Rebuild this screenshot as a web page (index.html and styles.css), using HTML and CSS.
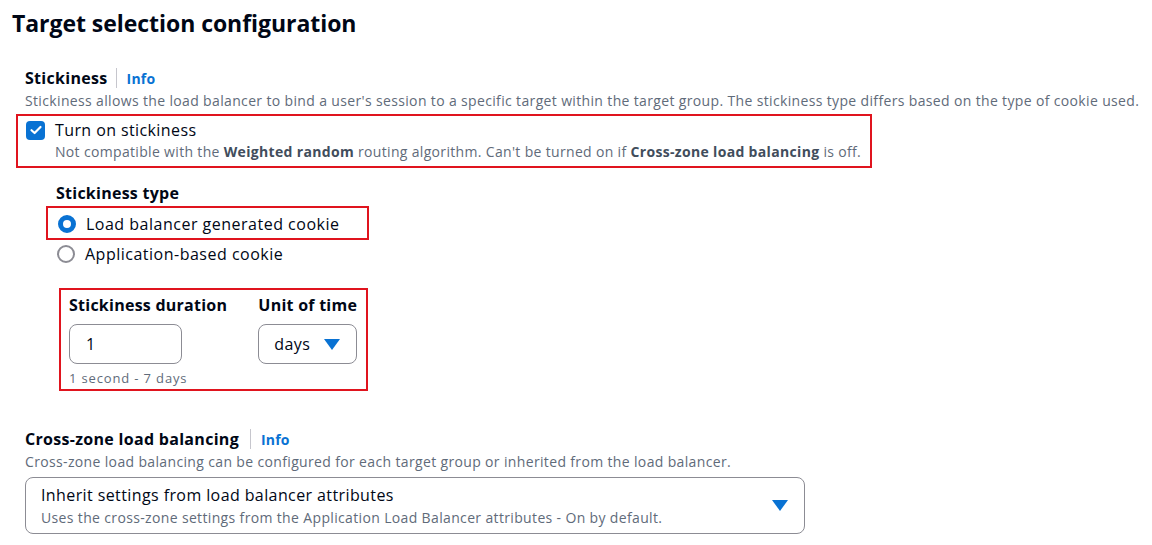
FILE: index.html
```html
<!DOCTYPE html>
<html lang="en">
<head>
<meta charset="utf-8">
<title>Target selection configuration</title>
<link rel="stylesheet" href="styles.css">
</head>
<body>
<main class="panel">
  <h2 class="title">Target selection configuration</h2>

  <section class="field">
    <div class="label-row">
      <span class="label">Stickiness</span>
      <span class="sep"></span>
      <a class="info" href="#">Info</a>
    </div>
    <p class="desc">Stickiness allows the load balancer to bind a user's session to a specific target within the target group. The stickiness type differs based on the type of cookie used.</p>

    <div class="hl hl-check">
      <label class="check-row">
        <span class="checkbox">
          <svg viewBox="0 0 14 14" width="14" height="14"><path d="M2.5 7.2 L5.6 10 L11.5 4" fill="none" stroke="#fff" stroke-width="2.2" stroke-linecap="round" stroke-linejoin="round"/></svg>
        </span>
        <span class="check-text">Turn on stickiness</span>
      </label>
      <p class="check-desc">Not compatible with the <b>Weighted random</b> routing algorithm. Can't be turned on if <b>Cross-zone load balancing</b> is off.</p>
    </div>

    <div class="nested">
      <div class="sub-label">Stickiness type</div>
      <div class="hl hl-radio">
        <label class="radio-row">
          <span class="radio on"></span>
          <span class="radio-text">Load balancer generated cookie</span>
        </label>
      </div>
      <label class="radio-row plain">
        <span class="radio"></span>
        <span class="radio-text">Application-based cookie</span>
      </label>

      <div class="hl hl-duration">
        <div class="dur-grid">
          <div class="dur-col">
            <div class="sub-label">Stickiness duration</div>
            <div class="input">1</div>
            <div class="hint">1 second - 7 days</div>
          </div>
          <div class="dur-col">
            <div class="sub-label">Unit of time</div>
            <div class="select small">
              <span>days</span>
              <span class="caret"></span>
            </div>
          </div>
        </div>
      </div>
    </div>
  </section>

  <section class="field cross">
    <div class="label-row">
      <span class="label">Cross-zone load balancing</span>
      <span class="sep"></span>
      <a class="info" href="#">Info</a>
    </div>
    <p class="desc">Cross-zone load balancing can be configured for each target group or inherited from the load balancer.</p>
    <div class="select big">
      <div class="big-text">
        <div class="big-main">Inherit settings from load balancer attributes</div>
        <div class="big-sub">Uses the cross-zone settings from the Application Load Balancer attributes - On by default.</div>
      </div>
      <span class="caret"></span>
    </div>
  </section>
</main>
</body>
</html>
```

FILE: styles.css
```css
* { box-sizing: border-box; }
html, body { margin: 0; padding: 0; background: #fff; }
body {
  font-family: "Open Sans", "Noto Sans", Arial, sans-serif;
  color: #000716;
  width: 1152px;
  height: 545px;
  overflow: hidden;
}
.panel { padding: 7px 0 0 12px; }
.title {
  margin: 0;
  font-size: 23px;
  font-weight: 700;
  line-height: 32px;
  letter-spacing: -0.05px;
}
.field { padding-left: 13px; margin-top: 28px; }
.label-row { display: flex; align-items: center; height: 22px; }
.label { font-size: 16px; font-weight: 700; letter-spacing: 0.3px; }
.sep { width: 1px; height: 20px; background: #c6c6cd; margin: 0 10px 0 8px; }
.info { color: #0972d3; font-size: 14px; font-weight: 700; text-decoration: none; letter-spacing: 0.2px; }
.desc {
  margin: 2px 0 0;
  font-size: 14px;
  line-height: 20px;
  color: #5f6b7a;
  letter-spacing: 0.35px;
}
.hl { border: 2px solid #e0141e; }
.hl-check {
  width: 856px;
  margin: 3px 0 0 -9px;
  padding: 2px 0 4px 8px;
}
.check-row { display: flex; align-items: center; gap: 10px; height: 24px; }
.checkbox {
  width: 19px; height: 19px; border-radius: 4px;
  background: #0972d3;
  display: flex; align-items: center; justify-content: center;
}
.check-text { font-size: 16px; letter-spacing: 0.4px; }
.check-desc {
  margin: 0 0 0 29px;
  font-size: 14px; line-height: 20px; color: #5f6b7a;
  letter-spacing: 0.33px;
}
.check-desc b { font-weight: 700; color: #414d5c; }
.nested { padding-left: 31px; margin-top: 14px; }
.sub-label { font-size: 16px; font-weight: 700; line-height: 22px; letter-spacing: 0.25px; }
.hl-radio {
  width: 323px;
  margin: 2px 0 0 -10px;
  padding: 3px 0 1px 9px;
}
.radio-row { display: flex; align-items: center; gap: 10px; height: 26px; }
.radio-row.plain { margin-top: 1px; margin-left: 1px; }
.hl-radio .radio-row { margin-left: 1px; }
.radio {
  width: 18px; height: 18px; border-radius: 50%;
  border: 2px solid #8c8c94; background: #fff;
  flex: none;
}
.radio.on { border: 5px solid #0972d3; }
.radio-text { font-size: 16px; letter-spacing: 0.5px; }
.hl-duration {
  width: 309px;
  margin: 21px 0 0 3px;
  padding: 4px 0 3px 8px;
}
.dur-grid { display: flex; gap: 31px; }
.dur-col { display: flex; flex-direction: column; }
.input, .select {
  border: 1px solid #8c8c94;
  border-radius: 8px;
  height: 40px;
  margin-top: 8px;
  display: flex; align-items: center;
  font-size: 16px;
  letter-spacing: 0.4px;
}
.input { width: 113px; padding-left: 16px; }
.hint { font-size: 13px; line-height: 16px; margin-top: 6px; color: #5f6b7a; letter-spacing: 0.85px; }
.select.small { width: 99px; padding: 0 16px 0 15px; justify-content: space-between; }
.caret {
  width: 0; height: 0;
  border-left: 8px solid transparent;
  border-right: 8px solid transparent;
  border-top: 11px solid #0972d3;
}
.cross { margin-top: 37px; }
.cross .sep { margin: 0 10px 0 11px; }
.select.big {
  width: 780px; height: 57px; margin-top: 5px;
  padding: 0 16px 0 15px;
  justify-content: space-between;
}
.big-main { font-size: 16px; line-height: 22px; letter-spacing: 0.4px; }
.big-sub { font-size: 14px; line-height: 20px; margin-top: 2px; color: #5f6b7a; letter-spacing: 0.35px; }
```
